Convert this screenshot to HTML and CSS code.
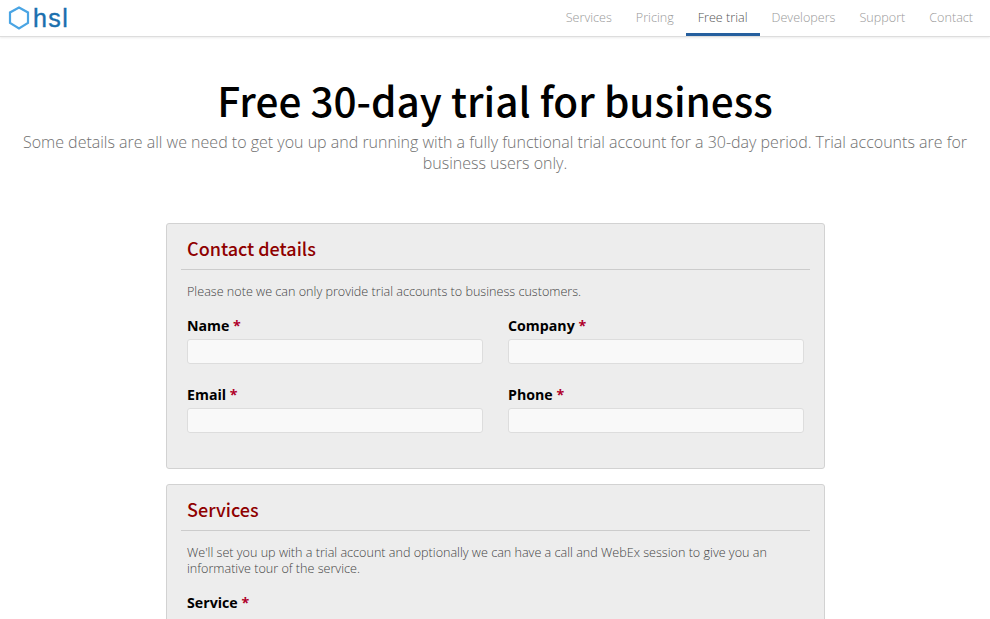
FILE: index.html
```html
<!DOCTYPE html>
<html lang="en">
<head>
<meta charset="utf-8">
<title>Free 30-day trial for business</title>
<link rel="stylesheet" href="styles.css">
</head>
<body>
<header class="topbar">
  <a class="logo" href="#">
    <svg class="logo-mark" width="22" height="24" viewBox="0 0 22 24" aria-hidden="true">
      <path d="M11 1.5 L20 6.5 V17 L11 22.5 L2 17 V6.5 Z" fill="none" stroke="#4aa5e4" stroke-width="2.2"/>
    </svg>
    <span class="logo-text">hsl</span>
  </a>
  <nav class="nav">
    <a href="#">Services</a>
    <a href="#">Pricing</a>
    <a href="#" class="active">Free trial</a>
    <a href="#">Developers</a>
    <a href="#">Support</a>
    <a href="#">Contact</a>
  </nav>
</header>
<main>
  <section class="hero">
    <h1>Free 30-day trial for business</h1>
    <p>Some details are all we need to get you up and running with a fully functional trial account for a 30-day period. Trial accounts are for business users only.</p>
  </section>
  <div class="forms">
    <section class="panel">
      <h2>Contact details</h2>
      <p class="note">Please note we can only provide trial accounts to business customers.</p>
      <div class="grid">
        <div class="field"><label>Name <em>*</em></label><input type="text"></div>
        <div class="field"><label>Company <em>*</em></label><input type="text"></div>
        <div class="field"><label>Email <em>*</em></label><input type="text"></div>
        <div class="field"><label>Phone <em>*</em></label><input type="text"></div>
      </div>
    </section>
    <section class="panel">
      <h2>Services</h2>
      <p class="note">We'll set you up with a trial account and optionally we can have a call and WebEx session to give you an informative tour of the service.</p>
      <div class="grid">
        <div class="field"><label>Service <em>*</em></label></div>
      </div>
    </section>
  </div>
</main>
</body>
</html>
```
FILE: styles.css
```css
* { box-sizing: border-box; }
html, body { margin: 0; padding: 0; overflow: hidden; height: 619px; }
body { font-family: "Open Sans", sans-serif; font-weight: 300; color: #333; background: #fff; }
.topbar { height: 37px; display: flex; justify-content: space-between; background: #fff; border-bottom: 1px solid #ddd; box-shadow: 0 1px 2px rgba(0,0,0,.08); }
.logo { display: flex; align-items: center; height: 36px; padding-left: 8px; text-decoration: none; }
.logo-mark { display: block; }
.logo-text { font-family: "Liberation Sans", sans-serif; font-weight: 400; font-size: 25px; line-height: 30px; letter-spacing: 1.4px; color: #1a6fae; margin-left: 3px; -webkit-text-stroke: .4px #1a6fae; }
.nav { display: flex; padding-right: 5px; }
.nav a { display: block; height: 36px; padding: 9px 12px 0; font-size: 12.6px; line-height: 18px; color: #999; text-decoration: none; }
.nav a.active { color: #555; border-bottom: 3px solid #255f9e; }
.hero { padding: 38px 20px 0; text-align: center; }
.hero h1 { margin: 0; font-family: "Noto Sans CJK JP", "Open Sans", sans-serif; font-weight: 500; font-size: 40.5px; line-height: 50px; color: #000; }
.hero p { margin: 7px 0 0; font-size: 16px; line-height: 21px; color: #707070; }
.forms { width: 659px; margin: 49px 0 0 166px; display: flex; flex-direction: column; gap: 15px; }
.panel { background: #ededed; border: 1px solid #d2d2d2; border-radius: 3px; padding: 10px 14px 35px; }
.panel h2 { margin: 0; padding: 0 6px 6px; border-bottom: 1px solid #ccc; font-family: "Noto Sans CJK JP", "Open Sans", sans-serif; font-weight: 500; font-size: 18px; line-height: 29px; color: #8f0000; }
.note { margin: 14px 6px 0; font-size: 12.6px; line-height: 16px; color: #444; }
.grid { display: grid; grid-template-columns: 296px 296px; column-gap: 25px; row-gap: 22px; margin: 17px 6px 0; }
.field label { display: block; font-weight: 700; font-size: 14.2px; line-height: 17px; color: #000; margin-bottom: 5px; }
.field em { font-style: normal; color: #b0002a; }
.field input { display: block; width: 100%; height: 25px; background: #f9f9f9; border: 1px solid #ddd; border-radius: 3px; padding: 0 6px; }
```
